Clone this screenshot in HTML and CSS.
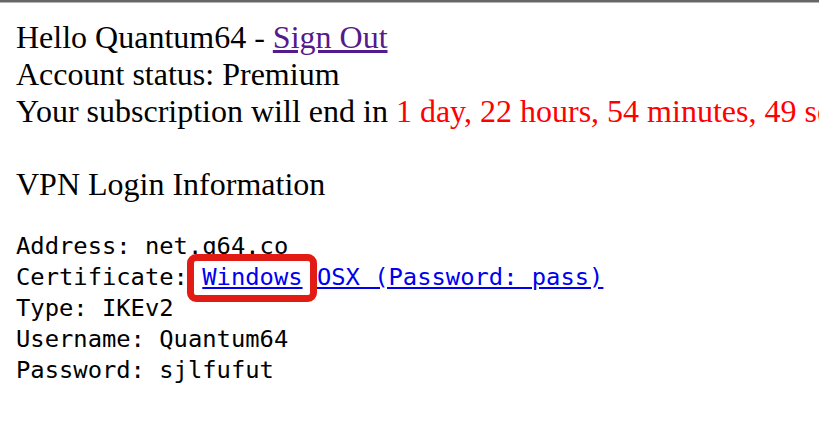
FILE: index.html
```html
<!DOCTYPE html>
<html>
<head>
<meta charset="utf-8">
<link rel="stylesheet" href="styles.css">
</head>
<body>
<div class="topbar"></div>
<div class="page">
  <div class="line">Hello Quantum64 - <a class="visited" href="#">Sign Out</a></div>
  <div class="line">Account status: Premium</div>
  <div class="line">Your subscription will end in <span class="red">1 day, 22 hours, 54 minutes, 49 seconds</span></div>
  <div class="line heading">VPN Login Information</div>
  <pre class="info">Address: net.q64.co
Certificate: <a class="link" href="#">Windows</a> <a class="link" href="#">OSX (Password: pass)</a>
Type: IKEv2
Username: Quantum64
Password: sjlfufut</pre>
</div>
<div class="highlight"></div>
</body>
</html>
```
FILE: styles.css
```css
html, body {
  margin: 0;
  padding: 0;
  background: #ffffff;
  overflow: hidden;
}
body {
  width: 819px;
  height: 438px;
  position: relative;
}
.topbar {
  height: 2px;
  background: #666666;
  border-bottom: 1px solid #b4b4b4;
}
.page {
  padding: 16px 16px 0 16px;
  font-family: "Liberation Serif", "Times New Roman", serif;
  font-size: 32px;
  color: #000000;
  white-space: nowrap;
}
.line {
  line-height: 37px;
  height: 37px;
}
.heading {
  margin-top: 36px;
}
.visited {
  color: #551a8b;
}
.red {
  color: #ff0000;
}
.info {
  margin: 28px 0 0 0;
  font-family: "DejaVu Sans Mono", "Liberation Mono", monospace;
  font-size: 23.8px;
  line-height: 31px;
  color: #000000;
}
.link {
  color: #0000ee;
}
.highlight {
  position: absolute;
  left: 187px;
  top: 254px;
  width: 130px;
  height: 48px;
  box-sizing: border-box;
  border: 7px solid #e21c14;
  border-radius: 9px;
}
```
